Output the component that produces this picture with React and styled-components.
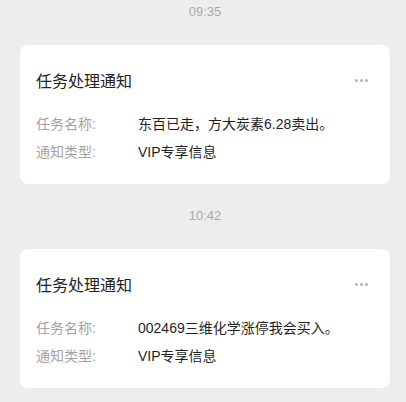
import React from 'react';
import styled, { createGlobalStyle } from 'styled-components';

const Global = createGlobalStyle`
  html, body {
    margin: 0;
    padding: 0;
    background: #ededed;
    font-family: "Liberation Sans", "Noto Sans CJK SC", sans-serif;
  }
`;

const Page = styled.div`
  padding: 0 16px 0 20px;
  width: 406px;
  box-sizing: border-box;
`;

const Time = styled.div`
  height: 24px;
  line-height: 24px;
  text-align: center;
  font-size: 13px;
  color: #aaaaaa;
  margin-top: ${p => (p.$first ? '0' : '20px')};
  margin-bottom: 21px;
`;

const Card = styled.div`
  background: #fff;
  border-radius: 8px;
  padding: 27px 16px 18px 16px;
`;

const Head = styled.div`
  display: flex;
  align-items: center;
  justify-content: space-between;
  height: 20px;
  margin-bottom: 18px;
`;

const Title = styled.div`
  font-size: 16px;
  line-height: 20px;
  color: #222;
`;

const More = styled.div`
  display: flex;
  gap: 2px;
  margin-right: 6px;
  margin-top: -4px;
`;

const Dot = styled.span`
  width: 3px;
  height: 3px;
  border-radius: 50%;
  background: #b2b2b2;
`;

const Row = styled.div`
  display: flex;
  height: 28px;
  line-height: 28px;
  font-size: 14px;
`;

const Label = styled.span`
  width: 102px;
  flex-shrink: 0;
  color: #a3a3a3;
`;

const Value = styled.span`
  color: #1f1f1f;
`;

const items = [
  { time: '09:35', name: '东百已走，方大炭素6.28卖出。' },
  { time: '10:42', name: '002469三维化学涨停我会买入。' },
];

function App() {
  return (
    <Page>
      <Global />
      {items.map((it, i) => (
        <React.Fragment key={it.time}>
          <Time $first={i === 0}>{it.time}</Time>
          <Card>
            <Head>
              <Title>任务处理通知</Title>
              <More>
                <Dot />
                <Dot />
                <Dot />
              </More>
            </Head>
            <Row>
              <Label>任务名称:</Label>
              <Value>{it.name}</Value>
            </Row>
            <Row>
              <Label>通知类型:</Label>
              <Value>VIP专享信息</Value>
            </Row>
          </Card>
        </React.Fragment>
      ))}
    </Page>
  );
}

export default App;
